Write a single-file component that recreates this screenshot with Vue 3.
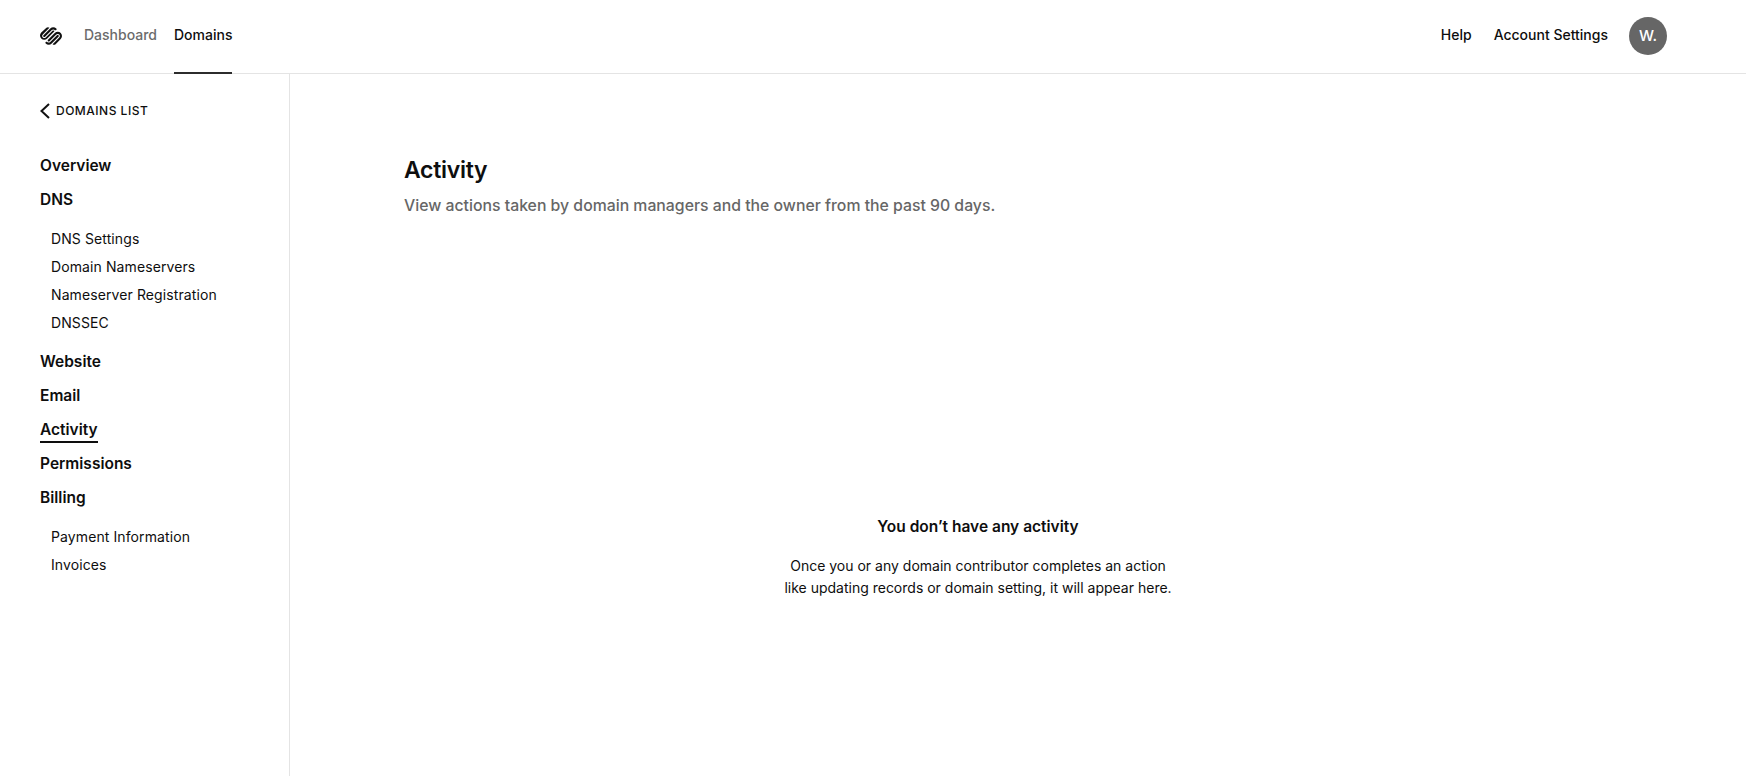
<script setup>
const groups = [
  { label: 'Overview' },
  { label: 'DNS', subs: ['DNS Settings', 'Domain Nameservers', 'Nameserver Registration', 'DNSSEC'] },
  { label: 'Website' },
  { label: 'Email' },
  { label: 'Activity', active: true },
  { label: 'Permissions' },
  { label: 'Billing', subs: ['Payment Information', 'Invoices'] },
]
</script>

<template>
  <div class="page">
    <header class="topbar">
      <div class="top-left">
        <svg class="logo" viewBox="0 0 24 24" width="22" height="22" fill="#111">
          <path d="M22.655 8.719c-1.802-1.801-4.726-1.801-6.564 0l-7.351 7.35c-.45.45-.45 1.2 0 1.65.45.449 1.2.449 1.65 0l7.351-7.351c.899-.899 2.362-.899 3.264 0 .9.9.9 2.364 0 3.264l-7.239 7.239c.9.899 2.362.899 3.263 0l5.589-5.589c1.836-1.838 1.836-4.763.037-6.563zm-2.475 2.437c-.451-.45-1.201-.45-1.65 0l-7.354 7.389c-.9.899-2.361.899-3.262 0-.45-.45-1.2-.45-1.65 0s-.45 1.2 0 1.649c1.801 1.801 4.726 1.801 6.564 0l7.351-7.35c.449-.487.449-1.2.001-1.688zm-2.439-7.35c-1.801-1.801-4.726-1.801-6.564 0l-7.351 7.351c-.45.449-.45 1.199 0 1.649s1.2.45 1.65 0l7.395-7.351c.9-.899 2.361-.899 3.262 0 .45.45 1.2.45 1.65 0s.45-1.2 0-1.649zm-2.437 2.474c-.451-.45-1.201-.45-1.65 0l-7.351 7.351c-.899.9-2.363.9-3.265 0-.9-.9-.9-2.364 0-3.264l7.239-7.239c-.9-.9-2.362-.9-3.263 0L1.35 8.194c-1.8 1.8-1.8 4.725 0 6.563 1.801 1.801 4.725 1.801 6.564 0l7.35-7.351c.488-.487.488-1.199.04-1.648z" />
        </svg>
        <a class="tab">Dashboard</a>
        <a class="tab current">Domains</a>
      </div>
      <div class="top-right">
        <a class="link help">Help</a>
        <a class="link">Account Settings</a>
        <div class="avatar">W.</div>
      </div>
    </header>
    <div class="body">
      <aside class="sidebar">
        <a class="back">
          <svg viewBox="0 0 11 16" width="11" height="16" fill="none" stroke="#111" stroke-width="2"><path d="M9 1 1.5 8 9 15" /></svg>
          <span>DOMAINS LIST</span>
        </a>
        <nav class="nav">
          <div v-for="g in groups" :key="g.label" class="group">
            <div class="item"><span :class="{ active: g.active }">{{ g.label }}</span></div>
            <div v-if="g.subs" class="subs">
              <div v-for="s in g.subs" :key="s" class="sub">{{ s }}</div>
            </div>
          </div>
        </nav>
      </aside>
      <main class="main">
        <h1 class="title">Activity</h1>
        <p class="lead">View actions taken by domain managers and the owner from the past 90 days.</p>
        <section class="empty">
          <h2>You don’t have any activity</h2>
          <p>Once you or any domain contributor completes an action<br />like updating records or domain setting, it will appear here.</p>
        </section>
      </main>
    </div>
  </div>
</template>

<style>
html, body { margin: 0; background: #fff; }
</style>

<style scoped>
.page {
  height: 776px;
  display: flex;
  flex-direction: column;
  font-family: Inter, "Liberation Sans", sans-serif;
  color: #0e0e0e;
  overflow: hidden;
}
.topbar {
  height: 73px;
  flex: none;
  border-bottom: 1px solid #e4e4e4;
  display: flex;
  justify-content: space-between;
  padding: 0 79px 0 40px;
}
.top-left, .top-right { display: flex; align-items: center; }
.logo { margin-right: 22px; margin-bottom: 1px; }
.tab {
  height: 73px;
  box-sizing: border-box;
  display: flex;
  align-items: center;
  padding-bottom: 4px;
  font-size: 14px;
  font-weight: 500;
  color: #6b6b6b;
  margin-right: 17px;
  position: relative;
}
.tab.current { color: #0e0e0e; }
.tab.current::after {
  content: "";
  position: absolute;
  left: 0;
  right: 0;
  bottom: -1px;
  height: 2px;
  background: #2c2c2c;
}
.link { font-size: 14px; font-weight: 500; margin-right: 21px; margin-bottom: 4px; }
.link.help { margin-right: 22px; }
.avatar {
  width: 38px;
  height: 38px;
  margin-bottom: 2px;
  border-radius: 50%;
  background: #666;
  color: #fff;
  font-size: 15px;
  font-weight: 500;
  display: flex;
  align-items: center;
  justify-content: center;
}
.body { flex: 1; display: flex; min-height: 0; }
.sidebar {
  flex: none;
  border-right: 1px solid #e4e4e4;
  padding-left: 40px;
  box-sizing: border-box;
  width: 290px;
}
.back {
  display: flex;
  align-items: center;
  gap: 5px;
  height: 20px;
  margin-top: 26px;
  font-size: 12px;
  font-weight: 500;
  letter-spacing: 0.5px;
}
.back svg { position: relative; top: 1px; }
.nav { margin-top: 28px; display: flex; flex-direction: column; }
.item {
  height: 34px;
  display: flex;
  align-items: center;
  font-size: 15.5px;
  font-weight: 600;
}
.item .active {
  display: inline-block;
  position: relative;
}
.item .active::after {
  content: "";
  position: absolute;
  left: 0;
  right: 0;
  bottom: -4px;
  height: 2px;
  background: #0e0e0e;
}
.subs { padding: 8px 0 8px 11px; }
.sub {
  height: 28px;
  display: flex;
  align-items: center;
  font-size: 14px;
  font-weight: 400;
  letter-spacing: 0.1px;
}
.main {
  flex: 1;
  padding: 0 80px 0 114px;
  display: flex;
  flex-direction: column;
}
.title {
  margin: 80px 0 0;
  font-size: 23px;
  line-height: 32px;
  font-weight: 600;
  letter-spacing: -0.3px;
}
.lead {
  margin: 8px 0 0;
  font-size: 15.8px;
  line-height: 24px;
  font-weight: 550;
  color: #666;
}
.empty {
  margin: 0 0 0 -114px;
  padding-top: 297px;
  text-align: center;
}
.empty h2 {
  margin: 0;
  font-size: 15.5px;
  line-height: 24px;
  font-weight: 600;
}
.empty p {
  margin: 16px 0 0;
  font-size: 14px;
  line-height: 22px;
  font-weight: 400;
}
</style>
